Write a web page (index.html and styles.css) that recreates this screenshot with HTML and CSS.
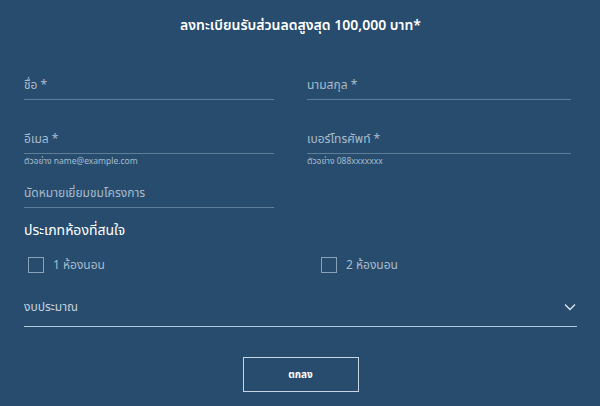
FILE: index.html
```html
<!DOCTYPE html>
<html lang="th">
<head>
<meta charset="utf-8">
<link rel="stylesheet" href="styles.css">
</head>
<body>
<form class="form">
  <h1 class="title">ลงทะเบียนรับส่วนลดสูงสุด 100,000 บาท*</h1>
  <div class="grid">
    <div class="field"><div class="label">ชื่อ *</div></div>
    <div class="field field-right"><div class="label">นามสกุล *</div></div>
    <div class="field"><div class="label">อีเมล *</div><div class="hint">ตัวอย่าง name@example.com</div></div>
    <div class="field field-right"><div class="label">เบอร์โทรศัพท์ *</div><div class="hint">ตัวอย่าง 088xxxxxxx</div></div>
    <div class="field"><div class="label">นัดหมายเยี่ยมชมโครงการ</div></div>
  </div>
  <h2 class="section">ประเภทห้องที่สนใจ</h2>
  <div class="checks">
    <label class="check"><span class="box"></span><span>1 ห้องนอน</span></label>
    <label class="check"><span class="box"></span><span>2 ห้องนอน</span></label>
  </div>
  <div class="select">
    <span>งบประมาณ</span>
    <svg class="chev" width="12" height="8" viewBox="0 0 12 8"><path d="M1 1.5 L6 6.5 L11 1.5" fill="none" stroke="#dfe8f0" stroke-width="1.3"/></svg>
  </div>
  <div class="actions"><button type="button" class="btn">ตกลง</button></div>
</form>
</body>
</html>
```
FILE: styles.css
```css
html, body {
  margin: 0;
  padding: 0;
  background: #274c6d;
}
body {
  width: 600px;
  height: 406px;
  overflow: hidden;
  font-family: "Noto Sans Thai", "Noto Sans", "DejaVu Sans", sans-serif;
  color: #a9bccd;
}
.form {
  padding: 0 23px 0 24px;
}
.title {
  margin: 0;
  padding-top: 16px;
  height: 22px;
  text-align: center;
  font-size: 14px;
  font-weight: 600;
  color: #ffffff;
  line-height: 20px;
}
.grid {
  display: grid;
  grid-template-columns: 250px 264px;
  column-gap: 33px;
  margin-top: 38px;
}
.field {
  height: 54px;
}
.label {
  height: 23px;
  line-height: 18px;
  font-size: 12px;
  color: #a9bccd;
  border-bottom: 1px solid #5e7e99;
}
.hint {
  font-size: 8.5px;
  line-height: 12px;
  margin-top: 2px;
  color: #a9bccd;
}
.section {
  margin: -17px 0 0;
  font-size: 14px;
  font-weight: 400;
  color: #ffffff;
  line-height: 20px;
}
.checks {
  display: grid;
  grid-template-columns: 293px 1fr;
  margin-top: 15px;
  padding-left: 4px;
}
.check {
  display: flex;
  align-items: center;
  gap: 9px;
  font-size: 12px;
  color: #a9bccd;
}
.box {
  width: 14px;
  height: 14px;
  border: 1px solid #8aa2b8;
}
.select {
  display: flex;
  justify-content: space-between;
  align-items: center;
  margin-top: 20px;
  height: 26px;
  padding-bottom: 6px;
  border-bottom: 1px solid #b3cadd;
  font-size: 12px;
  color: #c4d3e0;
}
.chev {
  margin-right: 1px;
}
.actions {
  display: flex;
  justify-content: center;
  margin-top: 30px;
}
.btn {
  width: 116px;
  height: 35px;
  background: transparent;
  border: 1px solid #c7d6e2;
  color: #ffffff;
  font-family: inherit;
  font-size: 10px;
  font-weight: 700;
}
```
